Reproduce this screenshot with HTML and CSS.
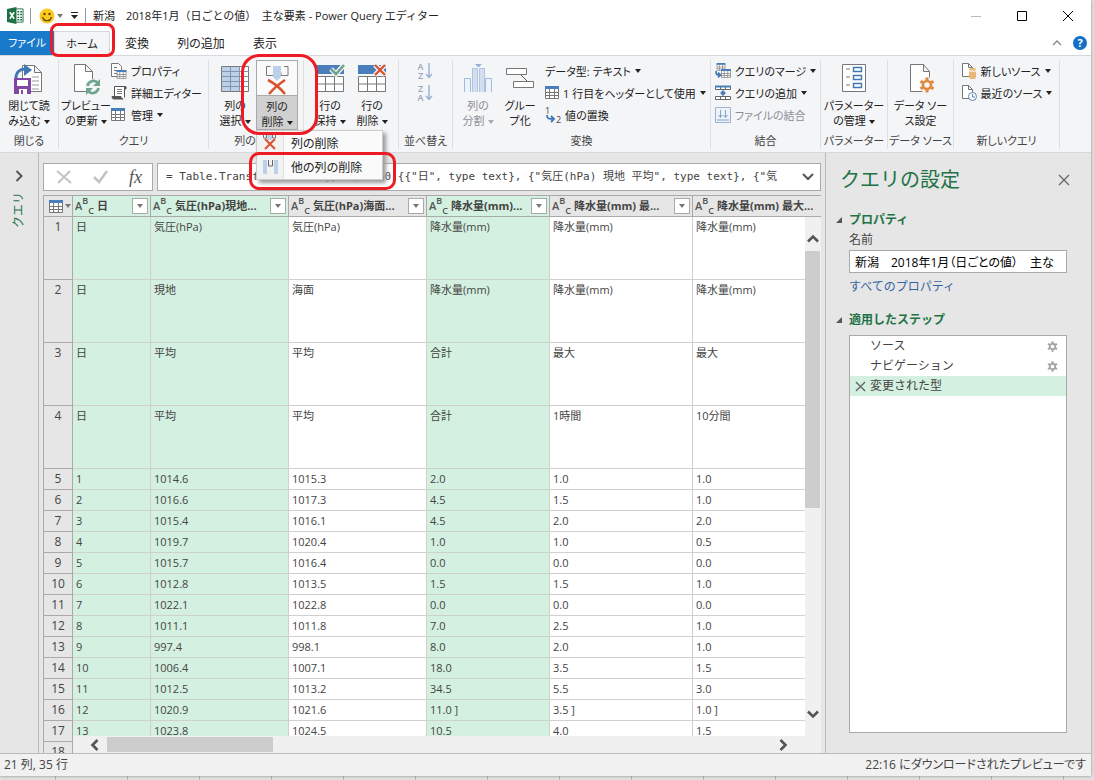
FILE: index.html
```
<!DOCTYPE html>
<html lang="ja">
<head>
<meta charset="utf-8">
<title>Power Query エディター</title>
<link rel="stylesheet" href="styles.css">
</head>
<body>
<svg class="defs" aria-hidden="true">
  <symbol id="gear" viewBox="0 0 16 16"><g fill="none" stroke="currentColor"><circle cx="8" cy="8" r="4" stroke-width="2.6"/><path stroke-width="3" d="M8 .5v3M8 12.500v3M1.500 4.250l2.600 1.500M11.900 10.250l2.600 1.500M1.500 11.750l2.600-1.500M11.900 5.750l2.600-1.500"/></g></symbol>
  <symbol id="grid" viewBox="0 0 14 13"><path d="M.5.5h13v12H.5z" fill="#fff" stroke="#777"/><path d="M0 0h14v3H0z" fill="#4a7ebb"/><path d="M.5 6.500h13M.5 9.500h13M4.500 3v9.500M9.500 3v9.500" stroke="#777" fill="none"/></symbol>
</svg>
<div class="window">
  <header class="titlebar">
    <svg class="excel" viewBox="0 0 18 18"><path d="M9 2h8v14H9z" fill="#fff" stroke="#217346"/><path d="M11 5h2M14 5h2M11 8h2M14 8h2M11 11h2M14 11h2M11 13.500h2M14 13.500h2" stroke="#217346" stroke-width="1.500"/><path d="M0 2l10-2v18L0 16z" fill="#1d7044"/><path d="M3 5.500l4.500 7M7.500 5.500L3 12.500" stroke="#fff" stroke-width="1.700"/></svg>
    <span class="bar"></span>
    <svg class="smile" viewBox="0 0 16 16"><circle cx="8" cy="8" r="7.500" fill="#fcca1c"/><circle cx="5.500" cy="6" r="1.200" fill="#5c4300"/><circle cx="10.500" cy="6" r="1.200" fill="#5c4300"/><path d="M3.500 9c1.500 5 7.500 5 9 0" stroke="#5c4300" fill="none" stroke-width="1.200"/></svg>
    <i class="caret dim"></i>
    <svg class="qat" viewBox="0 0 8 9"><path d="M0 1.500h7" stroke="#222"/><path d="M0 4h7L3.500 8z" fill="#222"/></svg>
    <span class="bar"></span>
    <h1>新潟　2018年1月（日ごとの値）　主な要素 - Power Query エディター</h1>
    <div class="winbtns">
      <button aria-label="最小化"><svg viewBox="0 0 12 12"><path d="M1 6.500h10" stroke="#bbb"/></svg></button>
      <button aria-label="最大化"><svg viewBox="0 0 12 12"><path d="M1.500 1.500h9v9h-9z" stroke="#000" fill="none"/></svg></button>
      <button aria-label="閉じる"><svg viewBox="0 0 12 12"><path d="M1 1l10 10M11 1L1 11" stroke="#000"/></svg></button>
    </div>
  </header>
  <nav class="tabs">
    <button class="file">ファイル</button>
    <button class="tab active marked">ホーム</button>
    <button class="tab">変換</button>
    <button class="tab wide">列の追加</button>
    <button class="tab">表示</button>
    <span class="tabs-end">
      <button aria-label="リボンを折りたたむ"><svg width="10" height="8" viewBox="0 0 10 8"><path d="M1 6l4-4 4 4" stroke="#888" fill="none" stroke-width="1.300"/></svg></button>
      <button class="help">?</button>
    </span>
  </nav>
  <section class="ribbon">
    <div class="group">
      <div class="tools">
        <button class="big"><svg width="30" height="32" viewBox="0 0 30 32"><path d="M8.500 2.500h12l7 7v19h-19zM20.500 2.500v7h7" fill="#fff" stroke="#777"/><path d="M18 14h7M18 18h7M18 22h7M18 26h7" stroke="#999"/><path d="M2 15c0-6 4-9 9-9" stroke="#3f76b5" stroke-width="3" fill="none"/><path d="M10 1l8 6-8 6z" fill="#3f76b5"/><path d="M0 15h17v16H0z" fill="#8147a5"/><path d="M3 17h11v6H3zM5 26h8v5H5z" fill="#fff"/><path d="M7 27h2v4H7z" fill="#8147a5"/></svg><span>閉じて読<br>み込む<i class="caret"></i></span></button>
      </div>
      <div class="cap">閉じる</div>
    </div>
    <div class="group">
      <div class="tools">
        <button class="big lead"><svg width="30" height="32" viewBox="0 0 30 32"><path d="M3.500 1.500h11l7 7v20h-18zM14.500 1.500v7h7" fill="#fff" stroke="#777"/><circle cx="22" cy="24" r="8" fill="#f4f5f7"/><path d="M16.500 23a6 6 0 0 1 10-3.500M27.500 25a6 6 0 0 1-10 3.500" stroke="#6fa58c" stroke-width="2.600" fill="none"/><path d="M29 16v7h-7zM15 32v-7h7z" fill="#6fa58c"/></svg><span>プレビュー<br>の更新<i class="caret"></i></span></button>
        <div class="stack">
          <button><svg width="16" height="16" viewBox="0 0 16 16"><path d="M.5.500h7l3 3v10H.500z" fill="#fff" stroke="#777"/><path d="M3 4.500h3M3 7.500h3M3 10.500h3" stroke="#777"/><use href="#grid" x="5" y="7" width="11" height="9"/></svg>プロパティ</button>
          <button><svg width="16" height="16" viewBox="0 0 16 16"><path d="M3.500 11V1.500h10v11" fill="#fff" stroke="#555"/><path d="M13.500 4V1.500h1.500V4zM1 11.500h9c0 2 1 2.500 2 2.500H3c-1.500 0-2-1-2-2.500z" fill="#555" stroke="#555"/><path d="M6 4.500h5M6 6.500h5M6 8.500h5" stroke="#777"/></svg>詳細エディター</button>
          <button><svg width="16" height="14"><use href="#grid" width="14" height="13"/></svg>管理<i class="caret"></i></button>
        </div>
      </div>
      <div class="cap">クエリ</div>
    </div>
    <div class="group">
      <div class="tools">
        <button class="big"><svg width="30" height="32" viewBox="0 0 30 32"><path d="M1.500 3.500h27v25h-27z" fill="#fff" stroke="#777"/><path d="M2 4h18v24H2z" fill="#bdd0e9"/><path d="M1.500 8.500h27M1.500 13.500h27M1.500 18.500h27M1.500 23.500h27M10.500 3.500v25M19.500 3.500v25" stroke="#8395ab"/></svg><span>列の<br>選択<i class="caret"></i></span></button>
        <div class="split">
          <button class="big pressed"><svg width="30" height="32" viewBox="0 0 30 32"><path d="M8.500 3.500h-4v9h7v-3M22 3.500h4v9h-7v-3" stroke="#777" fill="none"/><path d="M11 3h8v11l-4 4-4-4z" fill="#bdd0e9"/><path d="M6 17c6 3 12 8 17 14M23 17C17 21 12 25 7 31" stroke="#d9532f" stroke-width="2.600" fill="none"/></svg><span>列の<br>削除<i class="caret"></i></span></button>
          <div class="menu" role="menu">
            <button role="menuitem"><svg width="18" height="18" viewBox="0 0 18 18"><path d="M2.500 0v4h3V0M11.500 0v4h3V0" stroke="#777" fill="none"/><path d="M6 0h5v6H6z" fill="#bdd0e9"/><path d="M4 5l10 10M14 5L4 15" stroke="#d9532f" stroke-width="2"/></svg>列の削除</button>
            <button role="menuitem" class="marked"><svg width="18" height="18" viewBox="0 0 18 18"><path d="M2 2h4v14H2zM13 2h4v14h-4z" fill="#bdd0e9"/><path d="M7.500 2v6h4V2" stroke="#666" fill="none"/></svg>他の列の削除</button>
          </div>
        </div>
      </div>
      <div class="cap">列の管理</div>
    </div>
    <div class="group">
      <div class="tools">
        <button class="big"><svg width="30" height="32" viewBox="0 0 30 32"><path d="M1.500 13.500h27v15h-27zM1.500 21h27M10.500 13.500v15M19.500 13.500v15" fill="#fff" stroke="#777"/><path d="M1 2h28v9H1z" fill="#4a7ebb"/><path d="M16 6l5 5 8-9" stroke="#f4f5f7" stroke-width="5" fill="none"/><path d="M16 6l5 5 8-9" stroke="#6fa58c" stroke-width="2.600" fill="none"/></svg><span>行の<br>保持<i class="caret"></i></span></button>
        <button class="big"><svg width="30" height="32" viewBox="0 0 30 32"><path d="M1.500 13.500h27v15h-27zM1.500 21h27M10.500 13.500v15M19.500 13.500v15" fill="#fff" stroke="#777"/><path d="M1 2h28v9H1z" fill="#4a7ebb"/><path d="M18 2l10 10M28 2L18 12" stroke="#f4f5f7" stroke-width="5"/><path d="M18 2l10 10M28 2L18 12" stroke="#d9532f" stroke-width="2.400"/></svg><span>行の<br>削除<i class="caret"></i></span></button>
      </div>
      <div class="cap">行の削減</div>
    </div>
    <div class="group">
      <div class="tools sort">
        <button aria-label="昇順"><span>A<br>Z</span><svg width="8" height="18" viewBox="0 0 8 18"><path d="M4 1v14M1 12l3 3.500L7 12" stroke="#9ab0d2" fill="none" stroke-width="1.400"/></svg></button>
        <button aria-label="降順"><span>Z<br>A</span><svg width="8" height="18" viewBox="0 0 8 18"><path d="M4 1v14M1 12l3 3.500L7 12" stroke="#9ab0d2" fill="none" stroke-width="1.400"/></svg></button>
      </div>
      <div class="cap">並べ替え</div>
    </div>
    <div class="group">
      <div class="tools">
        <button class="big off"><svg width="30" height="32" viewBox="0 0 30 32"><path d="M1.500 29V15.500h6V29M22.500 29V15.500h6V29" fill="#edf3fb" stroke="#a5bad8"/><path d="M9.500 29V5.500h5V29M16.500 29V5.500h5V29" fill="#d3dff0" stroke="#b2c4de"/><path d="M12 1h7l-3.500 3.500z" fill="#9ab0d2"/></svg><span>列の<br>分割<i class="caret"></i></span></button>
        <button class="big lead"><svg width="30" height="32" viewBox="0 0 30 32"><path d="M15 11l8 8" stroke="#555"/><path d="M1.500 5.500h20v6h-20zM8.500 18.500h20v6h-20z" fill="#fff" stroke="#777"/></svg><span>グルー<br>プ化</span></button>
        <div class="stack">
          <button>データ型: テキスト<i class="caret"></i></button>
          <button><svg width="14" height="14"><use href="#grid" width="14" height="13"/></svg>1 行目をヘッダーとして使用<i class="caret"></i></button>
          <button><svg width="16" height="17" viewBox="0 0 16 17"><g font-family="Open Sans, sans-serif" font-size="9" fill="#444"><text x="0" y="7">1</text><text x="11" y="16">2</text></g><path d="M2 8c0 4 2 4 7 4M6 9l3 3-3 3" stroke="#3f76b5" fill="none" stroke-width="1.800"/></svg>値の置換</button>
        </div>
      </div>
      <div class="cap">変換</div>
    </div>
    <div class="group">
      <div class="tools">
        <div class="stack">
          <button><svg width="16" height="16" viewBox="0 0 16 16"><use href="#grid" x="1" width="10" height="8"/><use href="#grid" x="6" y="6" width="10" height="9"/><path d="M1 8c0 4 1 4 4 4M3 9.500L5.500 12 3 14.500" stroke="#3f76b5" fill="none" stroke-width="1.700"/></svg>クエリのマージ<i class="caret"></i></button>
          <button><svg width="16" height="16" viewBox="0 0 16 16"><path d="M.5 1.500h15v3H.5zM.5 11.500h15v3H.5zM5.500 11.500v3M10.500 11.500v3M5.500 1.500v3M10.500 1.500v3" fill="#fff" stroke="#666"/><path d="M0 1.500h16" stroke="#4a7ebb" stroke-width="2"/><path d="M8 5l3 3H5zM8 11l3-3H5z" fill="#4a7ebb"/></svg>クエリの追加<i class="caret"></i></button>
          <button class="off"><svg width="16" height="16" viewBox="0 0 16 16"><path d="M.5.500h15v15H.500z" fill="#edf3fb" stroke="#9fb1ce"/><path d="M5.500 3v7M3.500 8l2 2.500 2-2.500M10.500 3v7M8.500 8l2 2.500 2-2.500M2 13h12" stroke="#86a0c8" fill="none"/></svg>ファイルの結合</button>
        </div>
      </div>
      <div class="cap">結合</div>
    </div>
    <div class="group">
      <div class="tools">
        <button class="big"><svg width="30" height="32" viewBox="0 0 30 32"><path d="M3.500 1.500h23v27h-23z" fill="#fff" stroke="#777"/><path d="M7 6h4M7 14h4M7 22h4" stroke="#777"/><path d="M14.500 4.500h8v4h-8zM14.500 12.500h8v4h-8zM14.500 20.500h8v4h-8z" stroke="#3f76b5" fill="#fff" stroke-width="1.400"/></svg><span>パラメーター<br>の管理<i class="caret"></i></span></button>
      </div>
      <div class="cap">パラメーター</div>
    </div>
    <div class="group">
      <div class="tools">
        <button class="big"><svg width="30" height="32" viewBox="0 0 30 32"><path d="M4.500 1.500h13l6 7v20h-19zM17.500 1.500v7h6" fill="#fff" stroke="#777"/><circle cx="21" cy="22" r="8" fill="#f4f5f7"/><use href="#gear" x="13" y="14" width="16" height="16" color="#e28a3b"/></svg><span>データ ソー<br>ス設定</span></button>
      </div>
      <div class="cap">データ ソース</div>
    </div>
    <div class="group">
      <div class="tools">
        <div class="stack">
          <button><svg width="16" height="16" viewBox="0 0 16 16"><path d="M1.500.500h6l4 4v9h-10zM7.500.500v4h4" fill="#fff" stroke="#777"/><rect x="8" y="5" width="7" height="11" rx="2" fill="#e8b878"/><path d="M8 8h7" stroke="#fff"/></svg>新しいソース<i class="caret"></i></button>
          <button><svg width="16" height="16" viewBox="0 0 16 16"><path d="M1.500.500h6l4 4v9h-10zM7.500.500v4h4" fill="#fff" stroke="#777"/><circle cx="11.500" cy="11.500" r="4" fill="#fff" stroke="#5a83b4"/><path d="M11.500 9v3h2.500" stroke="#5a83b4" fill="none"/></svg>最近のソース<i class="caret"></i></button>
        </div>
      </div>
      <div class="cap">新しいクエリ</div>
    </div>
  </section>
  <div class="workspace">
    <aside class="queries">
      <button aria-label="展開"><svg width="9" height="12" viewBox="0 0 9 12"><path d="M1.500 1l5 5-5 5" stroke="#555" stroke-width="2" fill="none"/></svg></button>
      <span>クエリ</span>
    </aside>
    <main>
      <div class="formula">
        <div class="fx">
          <button aria-label="キャンセル"><svg width="16" height="14" viewBox="0 0 16 14"><path d="M1 1l14 12M14 1L2 13" stroke="#c3c3c3" stroke-width="2"/></svg></button>
          <button aria-label="確定"><svg width="16" height="14" viewBox="0 0 16 14"><path d="M1 7l5 5 8-11" stroke="#c3c3c3" stroke-width="2.600" fill="none"/></svg></button>
          <button class="fn">fx</button>
        </div>
        <div class="expr">
          <input aria-label="数式" value='= Table.TransformColumnTypes(Data0,{{"日", type text}, {"気圧(hPa) 現地 平均", type text}, {"気'>
          <button aria-label="数式を展開"><svg width="12" height="8" viewBox="0 0 12 8"><path d="M1 1l5 5 5-5" stroke="#555" stroke-width="2" fill="none"/></svg></button>
        </div>
      </div>
      <div class="sheet">
        <table>
          <colgroup><col class="c0"><col class="c1"><col class="c2"><col class="c2"><col class="c4"><col class="c5"><col class="c5"></colgroup>
          <thead><tr>
            <th><div class="head corner"><svg width="14" height="13"><use href="#grid" width="14" height="13"/></svg><i class="caret dim"></i></div></th>
            <th class="sel"><div class="head"><span class="abc"><i>A</i><i>B</i><i>C</i></span><b>日</b><button aria-label="フィルター"><i class="caret dim"></i></button></div></th>
            <th class="sel"><div class="head"><span class="abc"><i>A</i><i>B</i><i>C</i></span><b>気圧(hPa)現地...</b><button aria-label="フィルター"><i class="caret dim"></i></button></div></th>
            <th><div class="head"><span class="abc"><i>A</i><i>B</i><i>C</i></span><b>気圧(hPa)海面...</b><button aria-label="フィルター"><i class="caret dim"></i></button></div></th>
            <th class="sel"><div class="head"><span class="abc"><i>A</i><i>B</i><i>C</i></span><b>降水量(mm)...</b><button aria-label="フィルター"><i class="caret dim"></i></button></div></th>
            <th><div class="head"><span class="abc"><i>A</i><i>B</i><i>C</i></span><b>降水量(mm) 最...</b><button aria-label="フィルター"><i class="caret dim"></i></button></div></th>
            <th><div class="head"><span class="abc"><i>A</i><i>B</i><i>C</i></span><b>降水量(mm) 最大...</b></div></th>
          </tr></thead>
          <tbody>
            <tr class="tall"><th>1</th><td>日</td><td>気圧(hPa)</td><td>気圧(hPa)</td><td>降水量(mm)</td><td>降水量(mm)</td><td>降水量(mm)</td></tr>
            <tr class="tall"><th>2</th><td>日</td><td>現地</td><td>海面</td><td>降水量(mm)</td><td>降水量(mm)</td><td>降水量(mm)</td></tr>
            <tr class="tall"><th>3</th><td>日</td><td>平均</td><td>平均</td><td>合計</td><td>最大</td><td>最大</td></tr>
            <tr class="tall"><th>4</th><td>日</td><td>平均</td><td>平均</td><td>合計</td><td>1時間</td><td>10分間</td></tr>
            <tr><th>5</th><td>1</td><td>1014.6</td><td>1015.3</td><td>2.0</td><td>1.0</td><td>1.0</td></tr>
            <tr><th>6</th><td>2</td><td>1016.6</td><td>1017.3</td><td>4.5</td><td>1.5</td><td>1.0</td></tr>
            <tr><th>7</th><td>3</td><td>1015.4</td><td>1016.1</td><td>4.5</td><td>2.0</td><td>2.0</td></tr>
            <tr><th>8</th><td>4</td><td>1019.7</td><td>1020.4</td><td>1.0</td><td>1.0</td><td>0.5</td></tr>
            <tr><th>9</th><td>5</td><td>1015.7</td><td>1016.4</td><td>0.0</td><td>0.0</td><td>0.0</td></tr>
            <tr><th>10</th><td>6</td><td>1012.8</td><td>1013.5</td><td>1.5</td><td>1.5</td><td>1.0</td></tr>
            <tr><th>11</th><td>7</td><td>1022.1</td><td>1022.8</td><td>0.0</td><td>0.0</td><td>0.0</td></tr>
            <tr><th>12</th><td>8</td><td>1011.1</td><td>1011.8</td><td>7.0</td><td>2.5</td><td>1.0</td></tr>
            <tr><th>13</th><td>9</td><td>997.4</td><td>998.1</td><td>8.0</td><td>2.0</td><td>1.0</td></tr>
            <tr><th>14</th><td>10</td><td>1006.4</td><td>1007.1</td><td>18.0</td><td>3.5</td><td>1.5</td></tr>
            <tr><th>15</th><td>11</td><td>1012.5</td><td>1013.2</td><td>34.5</td><td>5.5</td><td>3.0</td></tr>
            <tr><th>16</th><td>12</td><td>1020.9</td><td>1021.6</td><td>11.0 ]</td><td>3.5 ]</td><td>1.0 ]</td></tr>
            <tr><th>17</th><td>13</td><td>1023.8</td><td>1024.5</td><td>10.5</td><td>4.0</td><td>1.5</td></tr>
            <tr><th>18</th><td></td><td></td><td></td><td></td><td></td><td></td></tr>
          </tbody>
        </table>
        <div class="vscroll"><svg width="12" height="9" viewBox="0 0 12 9"><path d="M1 7.500l5-5 5 5" stroke="#555" stroke-width="2.600" fill="none"/></svg><div class="track"><div class="vthumb"></div></div><svg width="12" height="9" viewBox="0 0 12 9"><path d="M1 1.500l5 5 5-5" stroke="#555" stroke-width="2.600" fill="none"/></svg></div>
        <div class="hscroll"><svg width="9" height="12" viewBox="0 0 9 12"><path d="M7.500 1l-5 5 5 5" stroke="#555" stroke-width="2.600" fill="none"/></svg><div class="track"><div class="hthumb"></div></div><svg width="9" height="12" viewBox="0 0 9 12"><path d="M1.500 1l5 5-5 5" stroke="#555" stroke-width="2.600" fill="none"/></svg></div>
      </div>
    </main>
    <aside class="settings">
      <div class="settings-head"><h2>クエリの設定</h2><button aria-label="閉じる"><svg width="12" height="12" viewBox="0 0 12 12"><path d="M1 1l10 10M11 1L1 11" stroke="#666" stroke-width="1.300"/></svg></button></div>
      <h3>プロパティ</h3>
      <div class="props">
        <label for="qname">名前</label>
        <input id="qname" value="新潟　2018年1月（日ごとの値）　主な">
        <a href="#all">すべてのプロパティ</a>
      </div>
      <h3>適用したステップ</h3>
      <ul class="steps">
        <li><span>ソース</span><svg class="cog"><use href="#gear"/></svg></li>
        <li><span>ナビゲーション</span><svg class="cog"><use href="#gear"/></svg></li>
        <li class="current"><svg class="del" viewBox="0 0 12 12"><path d="M1 1l10 10M11 1L1 11" stroke="#666" stroke-width="1.500"/></svg><span>変更された型</span></li>
      </ul>
    </aside>
  </div>
  <footer><span>21 列, 35 行</span><span>22:16 にダウンロードされたプレビューです</span></footer>
</div>
</body>
</html>
```

FILE: styles.css
```
* { box-sizing: border-box; }
body {
  margin: 0;
  height: 100vh;
  overflow: hidden;
  font: 12px/16px "Open Sans", "Noto Sans CJK JP", sans-serif;
  color: #444;
  background: repeating-linear-gradient(90deg, #e2e2e2 0 55px, #b4b4b4 55px 56px, #e2e2e2 56px 72px);
}
button, input { font: inherit; color: inherit; }
button { border: 0; padding: 0; background: none; display: flex; align-items: center; justify-content: center; white-space: nowrap; }
svg { flex: none; display: block; }
.defs { position: absolute; width: 0; height: 0; }
.caret { display: inline-block; flex: none; border: 3px solid transparent; border-top: 4px solid #222; border-bottom: 0; margin-left: 4px; vertical-align: middle; }
.caret.dim { border-top-color: #777; }
.marked { position: relative; }
.marked::after, .split::after { content: ""; position: absolute; z-index: 5; border: 3px solid #ed1c24; border-radius: 8px; pointer-events: none; }

.window { height: calc(100vh - 4px); margin-right: 3px; display: flex; flex-direction: column; background: #fff; box-shadow: 0 0 3px #888; }

.titlebar { height: 31px; flex: none; display: flex; align-items: center; padding-left: 7px; color: #222; }
.excel { width: 17px; height: 17px; }
.bar { width: 1px; height: 16px; background: #999; margin: 0 8px 0 6px; }
.smile { width: 16px; height: 16px; }
.titlebar .caret { margin-left: 2px; }
.qat { width: 8px; height: 9px; margin-left: 8px; }
.titlebar h1 { margin: 0; flex: 1; font-size: 11px; font-weight: 400; white-space: nowrap; }
.titlebar .qat + .bar { margin-right: 7px; }
.winbtns { display: flex; }
.winbtns button { width: 46px; height: 30px; }
.winbtns svg { width: 12px; height: 12px; }

.tabs { height: 24px; flex: none; display: flex; align-items: stretch; color: #222; font-feature-settings: "palt"; }
.file { width: 54px; background: #1979ca; color: #fff; }
.tab { width: 54px; border: 1px solid transparent; border-bottom: 0; }
.tab.wide { width: 74px; }
.tab.active { width: 56px; border-color: #d5d8dc; background: #f4f5f7; }
.file, .tab.active { font-size: 11px; }
.tab.marked::after { inset: -9px -6px -2px -5px; }
.tabs-end { margin-left: auto; display: flex; align-items: center; gap: 11px; padding-right: 4px; }
.help { width: 14px; height: 14px; border-radius: 50%; background: #1470c4; color: #fff; font-size: 11px; font-weight: 700; }

.ribbon {
  flex: none;
  display: grid;
  grid-template-columns: 59px 150px 95px 95px 54px 258px 110px 67px 66px 106px;
  padding: 4px 0 3px;
  background: #f4f5f7;
  border: solid #d5d8dc;
  border-width: 1px 0;
  color: #222;
  font-size: 11px;
  line-height: 15px;
  font-feature-settings: "palt";
}
.group { display: flex; flex-direction: column; border-right: 1px solid #dcdfe3; min-width: 0; }
.tools { display: flex; height: 70px; justify-content: center; }
.cap { padding: 3px 0 1px; text-align: center; white-space: nowrap; color: #444; }
.big { width: 42px; flex: none; flex-direction: column; justify-content: flex-start; padding-top: 3px; text-align: center; }
.big span { padding-top: 3px; }
.big .caret { margin-left: 3px; }
.big.lead { margin-right: 4px; }
.off { color: #8a8f96; }
.off .caret { border-top-color: #aaa; }
.stack { display: flex; flex-direction: column; }
.stack button { height: 22px; gap: 4px; justify-content: flex-start; }
.stack .caret { margin-left: 0; }
.sort { flex-direction: column; align-items: center; justify-content: flex-start; gap: 4px; padding-top: 2px; }
.sort button { gap: 2px; }
.sort span { font-size: 9px; line-height: 9px; font-weight: 600; color: #9aa6bd; }
.split { position: relative; z-index: 3; }
.split::after { inset: -6px -20px -5px -15px; border-radius: 18px; }
.pressed { height: 70px; padding-top: 2px; border: 1px solid #aaa; background: #fafafa; }
.pressed span { width: 100%; flex: 1; background: #d0d0d0; border-top: 1px solid #aaa; }
.menu { position: absolute; left: 0; top: 100%; width: 127px; background: linear-gradient(90deg, #f2f2f2 26px, #ddd 26px 27px, #fafafa 27px); border: 1px solid #ccc; box-shadow: 3px 3px 4px #999; font-size: 12px; }
.menu button { width: 100%; height: 24px; justify-content: flex-start; gap: 12px; padding-left: 4px; }
.menu .marked::after { inset: -3px -14px -11px -8px; border-radius: 10px; }

.workspace { flex: 1; min-height: 0; display: flex; background: #e6e6e6; }
.queries { width: 39px; flex: none; border-right: 1px solid #bbb; display: flex; flex-direction: column; align-items: center; padding-top: 17px; gap: 10px; color: #217346; }
.queries span { writing-mode: vertical-rl; transform: rotate(180deg); text-orientation: sideways; }
main { flex: 1; min-width: 0; padding: 10px 4px 0; display: flex; flex-direction: column; gap: 4px; }
.formula { display: flex; gap: 4px; height: 28px; flex: none; }
.formula > div { background: #fff; border: 1px solid #aaa; display: flex; }
.fx { width: 110px; flex: none; justify-content: space-between; padding: 0 10px 0 12px; }
.fn { font: italic 18px/20px "Liberation Serif", serif; color: #555; }
.expr { flex: 1; min-width: 0; padding: 0 5px 0 8px; }
.expr input { flex: 1; min-width: 0; border: 0; padding: 0; background: none; font: 11px/16px "DejaVu Sans Mono", "Noto Sans CJK JP", monospace; }
.expr button { width: 14px; margin-left: 16px; }

.sheet { flex: 1; min-height: 0; position: relative; overflow: hidden; border: solid #aaa; border-width: 1px 0 0 1px; background: #fff; }
table { table-layout: fixed; width: 784px; border-collapse: separate; border-spacing: 0; font-size: 11px; line-height: 14px; }
.c0 { width: 29px; } .c1 { width: 78px; } .c2 { width: 138px; } .c4 { width: 123px; } .c5 { width: 143px; }
th, td { padding: 0; border: solid #d0d0d0; border-width: 0 1px 1px 0; vertical-align: top; text-align: left; white-space: nowrap; }
th { background: #e6e6e6; border-color: #aaa; font-weight: 400; }
td { padding: 3px 3px 0; height: 21px; }
tbody th { font-size: 12px; text-align: center; padding-top: 3px; }
.tall td { height: 63px; }
th.sel, td:nth-child(2), td:nth-child(3), td:nth-child(5) { background: #d4f0e0; }
.head { display: flex; align-items: center; height: 20px; padding: 0 2px; }
.abc { display: flex; align-items: center; width: 18px; height: 20px; font-size: 9px; line-height: 10px; font-weight: 600; color: #555; }
.abc i { font-style: normal; }
.abc i:first-child { font-size: 11px; }
.abc i:nth-child(2) { align-self: flex-start; }
.abc i:last-child { align-self: flex-end; }
.head b { flex: 1; padding-left: 4px; font-weight: 700; font-feature-settings: "palt"; }
.head button { width: 16px; height: 16px; border: 1px solid #aaa; background: #fff; }
.head button .caret { margin: 0; }
.head.corner { padding-left: 5px; }
.head.corner .caret { margin-left: 2px; }
.vscroll, .hscroll { position: absolute; display: flex; align-items: center; background: #f0f0f0; }
.vscroll { top: 21px; right: 0; bottom: 0; width: 16px; flex-direction: column; padding: 17px 0 34px; gap: 8px; }
.hscroll { left: 29px; right: 0; bottom: 0; height: 17px; padding: 0 33px 0 17px; gap: 8px; }
.track { flex: 1; align-self: stretch; display: flex; }
.vthumb { width: 15px; height: 57%; background: #cdcdcd; }
.hthumb { width: 25%; height: 15px; background: #cdcdcd; align-self: center; }

.settings { width: 266px; flex: none; border-left: 1px solid #bbb; padding: 14px 24px 20px 10px; display: flex; flex-direction: column; }
.settings-head { display: flex; justify-content: space-between; align-items: center; margin: 0 -3px 17px 4px; }
h2 { margin: 0; font-size: 20px; line-height: 26px; font-weight: 400; color: #217346; }
h3 { margin: 0; font-size: 12px; line-height: 20px; color: #217346; display: flex; align-items: center; gap: 7px; }
h3::before { content: ""; border: solid transparent; border-width: 0 0 6px 6px; border-bottom-color: #555; }
.props { padding-left: 13px; display: flex; flex-direction: column; align-items: flex-start; }
.props label { line-height: 20px; }
.props input { width: 100%; height: 23px; border: 1px solid #aaa; padding: 0 5px; color: #000; background: #fff; font-feature-settings: "palt"; }
.props a { color: #3764a0; text-decoration: none; line-height: 20px; margin: 4px 0 13px; }
.steps { flex: 1; margin: 5px 0 0 13px; padding: 0; list-style: none; background: #fff; border: 1px solid #aaa; }
.steps li { display: flex; align-items: center; height: 20px; padding: 0 8px 0 20px; }
.steps span { flex: 1; }
.cog { width: 11px; height: 11px; color: #a5a5a5; }
.steps .current { background: #d4f0e0; padding-left: 5px; gap: 4px; }
.del { width: 11px; height: 11px; }

footer { flex: none; height: 23px; border-top: 1px solid #bbb; background: #f1f1f1; display: flex; justify-content: space-between; align-items: center; padding: 0 5px 0 4px; font-size: 12px; font-feature-settings: "palt"; }
```
